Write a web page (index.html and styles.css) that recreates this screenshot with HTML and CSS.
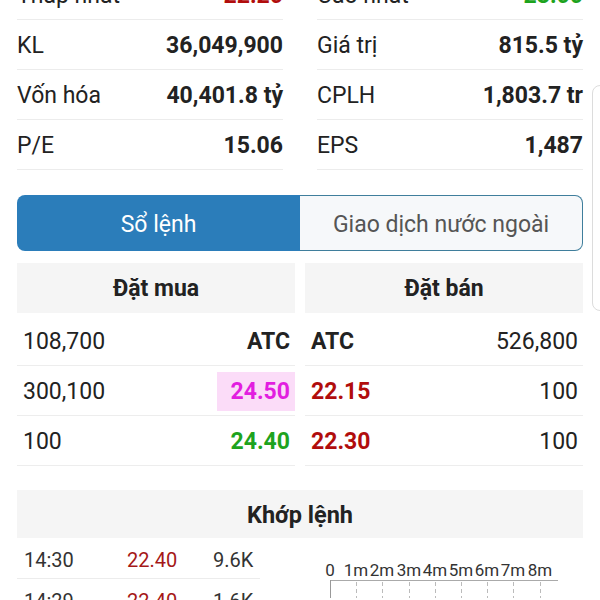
FILE: index.html
```html
<!DOCTYPE html>
<html lang="vi">

<head>
    <meta charset="UTF-8" />
    <title>Chi tiết cổ phiếu</title>
    <link rel="stylesheet" href="styles.css">
</head>

<body>

    <div class="page">
        <div class="stats">
            <div class="stat"><span>Thấp nhất</span><b class="down">22.20</b></div>
            <div class="stat"><span>Cao nhất</span><b class="up">23.00</b></div>
            <div class="stat"><span>KL</span><b>36,049,900</b></div>
            <div class="stat"><span>Giá trị</span><b>815.5 tỷ</b></div>
            <div class="stat"><span>Vốn hóa</span><b>40,401.8 tỷ</b></div>
            <div class="stat"><span>CPLH</span><b>1,803.7 tr</b></div>
            <div class="stat"><span>P/E</span><b>15.06</b></div>
            <div class="stat"><span>EPS</span><b>1,487</b></div>
        </div>

        <div class="tabs">
            <div class="tab active">Sổ lệnh</div>
            <div class="tab">Giao dịch nước ngoài</div>
        </div>

        <div class="book">
            <div class="side">
                <div class="side-head">Đặt mua</div>
                <div class="order"><span class="vol">108,700</span><span class="price">ATC</span></div>
                <div class="order"><span class="vol">300,100</span><span class="price ceil">24.50</span></div>
                <div class="order"><span class="vol">100</span><span class="price up">24.40</span></div>
            </div>
            <div class="side">
                <div class="side-head">Đặt bán</div>
                <div class="order"><span class="price">ATC</span><span class="vol">526,800</span></div>
                <div class="order"><span class="price down">22.15</span><span class="vol">100</span></div>
                <div class="order"><span class="price down">22.30</span><span class="vol">100</span></div>
            </div>
        </div>

        <div class="match-head">Khớp lệnh</div>
        <div class="match">
            <div class="trades">
                <div class="trade"><span>14:30</span><span class="red">22.40</span><span>9.6K</span></div>
                <div class="trade"><span>14:29</span><span class="red">22.40</span><span>1.6K</span></div>
            </div>
            <div class="chart">
                <svg width="250" height="60" viewBox="0 0 250 60">
                    <g font-family="Roboto, sans-serif" font-size="17" fill="#333" text-anchor="middle">
                        <text x="10" y="38">0</text>
                        <text x="36" y="38">1m</text>
                        <text x="62" y="38">2m</text>
                        <text x="89" y="38">3m</text>
                        <text x="115" y="38">4m</text>
                        <text x="141" y="38">5m</text>
                        <text x="167" y="38">6m</text>
                        <text x="193" y="38">7m</text>
                        <text x="220" y="38">8m</text>
                    </g>
                    <line x1="10" y1="42.5" x2="238" y2="42.5" stroke="#aaa" />
                    <line x1="10.5" y1="42" x2="10.5" y2="60" stroke="#999" />
                    <g stroke="#bbb" stroke-dasharray="4 3">
                        <line x1="36.5" y1="44" x2="36.5" y2="60" />
                        <line x1="62.5" y1="44" x2="62.5" y2="60" />
                        <line x1="89.5" y1="44" x2="89.5" y2="60" />
                        <line x1="115.5" y1="44" x2="115.5" y2="60" />
                        <line x1="141.5" y1="44" x2="141.5" y2="60" />
                        <line x1="167.5" y1="44" x2="167.5" y2="60" />
                        <line x1="193.5" y1="44" x2="193.5" y2="60" />
                        <line x1="220.5" y1="44" x2="220.5" y2="60" />
                    </g>
                </svg>
            </div>
        </div>
    </div>

    <div class="edge"></div>

</body>

</html>
```

FILE: styles.css
```css
body {
    margin: 0;
    background: #ffffff;
    font-family: Roboto, 'Noto Sans', sans-serif;
    color: #222;
    width: 600px;
    height: 600px;
    overflow: hidden;
    position: relative;
}

.page {
    padding: 0 17px;
}

.stats {
    display: grid;
    grid-template-columns: 1fr 1fr;
    column-gap: 34px;
    margin-top: -30px;
}

.stat {
    height: 48px;
    padding-top: 1px;
    border-bottom: 1px solid #ececec;
    display: flex;
    justify-content: space-between;
    align-items: center;
    font-size: 23px;
}

.stat b {
    font-weight: 700;
}

.up {
    color: #1ea31e;
}

.down {
    color: #b10d0d;
}

.tabs {
    display: grid;
    grid-template-columns: 1fr 1fr;
    margin-top: 25px;
    height: 56px;
}

.tab {
    display: flex;
    align-items: center;
    justify-content: center;
    padding-top: 3px;
    font-size: 23px;
    color: #555;
    background: #f6f8fa;
    border: 1.5px solid #3f7e9c;
    border-left: none;
    border-radius: 0 8px 8px 0;
}

.tab.active {
    background: #2b7dba;
    color: #fff;
    border: none;
    border-radius: 8px 0 0 8px;
}

.book {
    display: grid;
    grid-template-columns: 1fr 1fr;
    column-gap: 10px;
    margin-top: 12px;
}

.side-head {
    height: 49px;
    padding-top: 1px;
    background: #f5f5f5;
    display: flex;
    align-items: center;
    justify-content: center;
    font-size: 23px;
    font-weight: 700;
    margin-bottom: 3px;
}

.order {
    height: 47px;
    padding-top: 2px;
    border-bottom: 1px solid #ededed;
    display: flex;
    justify-content: space-between;
    align-items: center;
    font-size: 23px;
}

.order .vol {
    padding: 0 5px 0 6px;
}

.order .price {
    font-weight: 700;
    padding: 6px 5px 6px 6px;
}

.order .ceil {
    color: #e21ee0;
    background: #fbdcf8;
    padding-left: 14px;
}

.match-head {
    margin-top: 24px;
    height: 46px;
    padding-top: 2px;
    background: #f5f5f5;
    display: flex;
    align-items: center;
    justify-content: center;
    font-size: 23.5px;
    font-weight: 700;
}

.match {
    display: flex;
    gap: 60px;
}

.trades {
    width: 243px;
}

.trade {
    height: 37px;
    padding-top: 3px;
    border-bottom: 1px solid #ececec;
    display: flex;
    align-items: center;
    font-size: 20px;
    color: #333;
}

.trade span {
    flex: none;
    width: 96px;
    padding-left: 7px;
}

.trade span:nth-child(2) {
    width: 79px;
}

.trade span:nth-child(3) {
    width: auto;
}

.trade .red {
    color: #a51818;
}

.edge {
    position: absolute;
    left: 592px;
    top: 85px;
    width: 30px;
    height: 224px;
    border: 1px solid #dcdcdc;
    border-radius: 8px;
}
```
